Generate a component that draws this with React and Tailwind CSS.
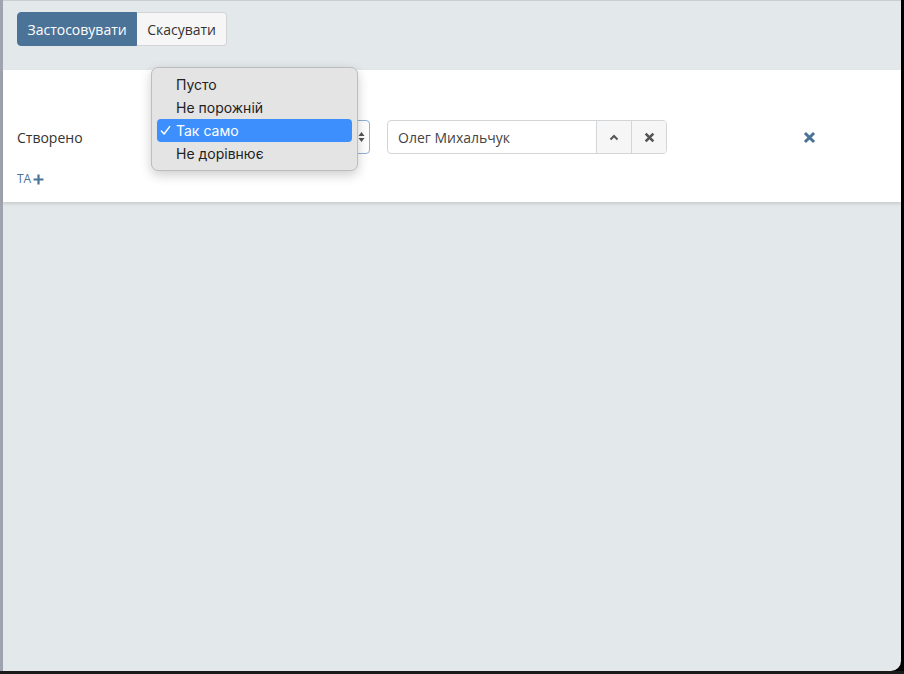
import React from "react";

function Check() {
  return (
    <svg width="11" height="11" viewBox="0 0 12 12" className="shrink-0">
      <path d="M1.5 6.5 L4.5 9.8 L10.5 1.8" fill="none" stroke="white" strokeWidth="1.6" strokeLinecap="round" strokeLinejoin="round" />
    </svg>
  );
}

function Times({ size = 11, color = "#555", w = 2.4 }) {
  return (
    <svg width={size} height={size} viewBox="0 0 10 10">
      <path d="M1.5 1.5 L8.5 8.5 M8.5 1.5 L1.5 8.5" stroke={color} strokeWidth={w} strokeLinecap="butt" />
    </svg>
  );
}

export default function App() {
  const options = ["Пусто", "Не порожній", "Так само", "Не дорівнює"];
  return (
    <div className="w-[904px] h-[674px] bg-black flex flex-col overflow-hidden" style={{ fontFamily: "'Open Sans', sans-serif" }}>
      <div className="flex flex-1">
        <div className="w-[3px] bg-[#9ea3ad]"></div>
        <div className="flex-1 flex flex-col bg-[#e3e8eb] rounded-br-[10px] border-t border-[#c9cdd1] relative">
          {/* buttons */}
          <div className="flex px-[14px] pt-[11px] h-[69px]">
            <button className="h-[34px] px-[9.5px] bg-[#4b7398] text-white text-[14px] rounded-l-[4px] border border-[#4b7398]">
              Застосовувати
            </button>
            <button className="h-[34px] px-[10px] bg-[#f6f6f6] text-[#333] text-[14px] rounded-r-[4px] border border-[#d2d4d6] border-l-0">
              Скасувати
            </button>
          </div>

          {/* filter card */}
          <div className="bg-white h-[132px] shadow-[0_2px_3px_rgba(0,0,0,0.12)] px-[14px] pt-[50px]">
            <div className="flex items-center h-[34px]">
              <div className="w-[135px] text-[14px] text-[#333]">Створено</div>
              <div className="w-[218px] h-[34px] border border-[#8fb0d4] rounded-[4px] flex items-center justify-end pr-[4px]">
                <svg width="7" height="12" viewBox="0 0 7 12">
                  <path d="M3.5 1 L6.5 5 L0.5 5 Z M3.5 11 L6.5 7 L0.5 7 Z" fill="#555" />
                </svg>
              </div>
              <div className="ml-[17px] w-[280px] h-[34px] flex border border-[#d3d6d9] rounded-[4px] overflow-hidden">
                <div className="flex-1 flex items-center px-[10px] text-[14px] text-[#444]">Олег Михальчук</div>
                <div className="w-[35px] bg-[#f6f6f6] border-l border-[#d3d6d9] flex items-center justify-center">
                  <svg width="10" height="7" viewBox="0 0 10 7">
                    <path d="M1.5 5.5 L5 2 L8.5 5.5" fill="none" stroke="#555" strokeWidth="2" />
                  </svg>
                </div>
                <div className="w-[35px] bg-[#f6f6f6] border-l border-[#d3d6d9] flex items-center justify-center">
                  <Times size={11} color="#555" />
                </div>
              </div>
              <div className="ml-[136px] flex items-center">
                <Times size={13} color="#4b7398" w={2.3} />
              </div>
            </div>
            <div className="mt-[16px] flex items-center gap-[2px] text-[12px] text-[#4b7398]">
              <span>ТА</span>
              <svg width="11" height="11" viewBox="0 0 10 10">
                <path d="M5 0.5 V9.5 M0.5 5 H9.5" stroke="#4b7398" strokeWidth="2" />
              </svg>
            </div>
          </div>

          {/* open select menu */}
          <div
            className="absolute left-[148px] top-[66px] w-[207px] rounded-[7px] bg-[#e4e4e4] border border-[#bdbdbd] shadow-[0_4px_12px_rgba(0,0,0,0.2)] py-[5px] px-[5px]"
            style={{ fontFamily: "Inter, 'Liberation Sans', sans-serif" }}
          >
            {options.map((o) => (
              <div
                key={o}
                className={
                  o === "Так само"
                    ? "h-[23px] flex items-center rounded-[4px] bg-[#3d8ffd] text-white text-[14px] pl-[3px]"
                    : "h-[23px] flex items-center text-[14px] text-[#222] pl-[19px]"
                }
              >
                {o === "Так само" && (
                  <span className="w-[16px] flex items-center">
                    <Check />
                  </span>
                )}
                {o}
              </div>
            ))}
          </div>
        </div>
        <div className="w-[3px] bg-black"></div>
      </div>
      <div className="h-[3px] bg-[#1a1a1a]"></div>
    </div>
  );
}
